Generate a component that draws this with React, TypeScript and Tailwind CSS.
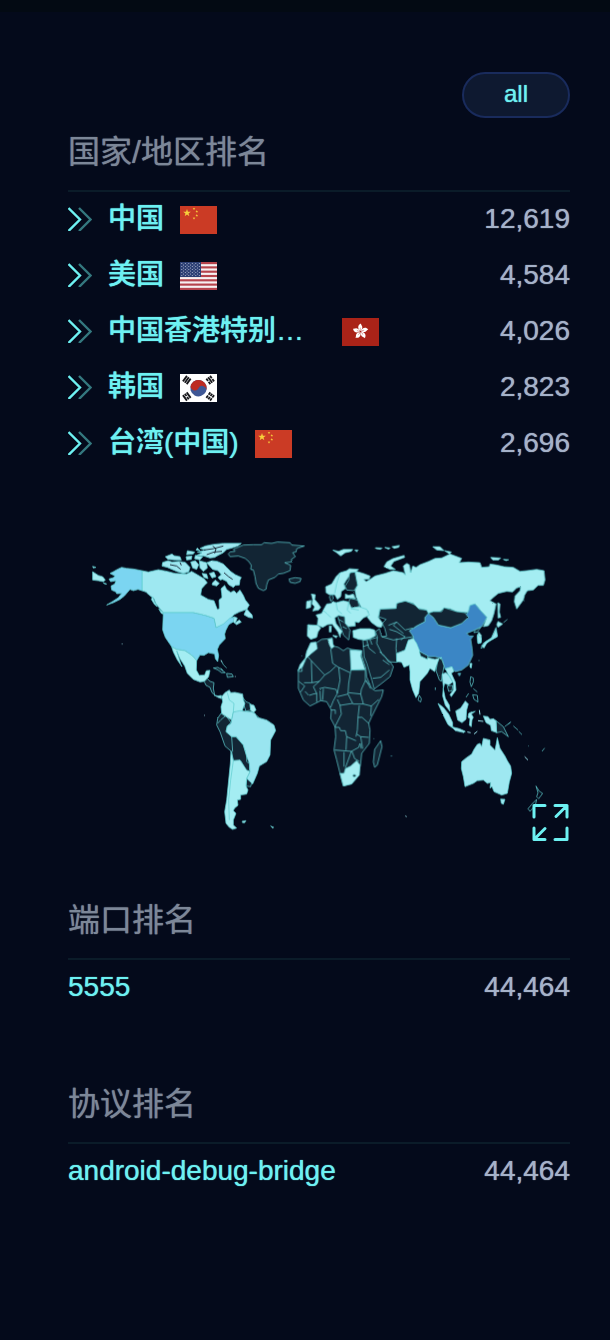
import type { ReactNode } from "react";

const SANS = "font-['Liberation_Sans','Noto_Sans_CJK_SC',sans-serif]";

function Chevrons() {
  return (
    <svg viewBox="0 0 24 24" className="mr-4 h-6 w-6 shrink-0" fill="none" strokeWidth="2.400" aria-hidden="true">
      <path d="M11 1 L22.500 12.500 L11 24" stroke="#34787f" />
      <path d="M0.500 1 L12 12.500 L0.500 24" stroke="#6df1f2" />
    </svg>
  );
}

function star(cx: number, cy: number, r: number) {
  return Array.from({ length: 10 }, (_, i) => {
    const a = -Math.PI / 2 + (i * Math.PI) / 5;
    const k = i % 2 ? r * 0.4 : r;
    return `${(cx + Math.cos(a) * k).toFixed(2)},${(cy + Math.sin(a) * k).toFixed(2)}`;
  }).join(" ");
}

function FlagFrame({ children, label }: { children: ReactNode; label: string }) {
  return (
    <svg viewBox="0 0 37 28" role="img" aria-label={label} className="h-7 w-[37px] shrink-0">
      {children}
    </svg>
  );
}

function ChinaFlag() {
  return (
    <FlagFrame label="CN">
      <rect width="37" height="28" fill="#cb3b25" />
      <g fill="#f7d03c">
        <polygon points={star(7, 7, 4)} />
        <polygon points={star(14, 2.8, 1.4)} />
        <polygon points={star(16.8, 5.5, 1.4)} />
        <polygon points={star(16.8, 9.5, 1.4)} />
        <polygon points={star(14, 12.3, 1.4)} />
      </g>
    </FlagFrame>
  );
}

function UsFlag() {
  return (
    <FlagFrame label="US">
      <rect width="37" height="28" fill="#f6f1f1" />
      {[0, 2, 4, 6, 8, 10, 12].map((i) => (
        <rect key={i} y={(i * 28) / 13} width="37" height={28 / 13} fill="#b5434b" />
      ))}
      <rect width="21" height="15" fill="#2c3f73" />
      {[0, 1, 2, 3, 4, 5, 6, 7, 8].map((r) =>
        Array.from({ length: r % 2 ? 5 : 6 }, (_, c) => (
          <circle key={`${r}-${c}`} cx={1.8 + c * 3.5 + (r % 2 ? 1.75 : 0)} cy={1.5 + r * 1.5} r="0.5" fill="#c9cfe0" />
        )),
      )}
    </FlagFrame>
  );
}

function HongKongFlag() {
  return (
    <FlagFrame label="HK">
      <rect width="37" height="28" fill="#aa2318" />
      {[0, 72, 144, 216, 288].map((a) => (
        <g key={a} transform={`translate(18.500 13.500) rotate(${a})`}>
          <path d="M0 -0.500 C-2.800 -2 -3.400 -6.500 0.500 -8 C0.200 -6.500 2.600 -5.500 1.600 -3 C1.200 -1.800 0.700 -1.200 0 -0.500Z" fill="#fff" />
          <path d="M0 -1 Q-0.800 -2.500 0 -3.800" stroke="#aa2318" strokeWidth="0.4" fill="none" />
        </g>
      ))}
    </FlagFrame>
  );
}

function Trigram({ x, y, angle, broken }: { x: number; y: number; angle: number; broken: boolean[] }) {
  return (
    <g transform={`translate(${x} ${y}) rotate(${angle})`} stroke="#16161a" strokeWidth="1.800">
      {broken.map((b, i) => (
        <path key={i} d={b ? "M-3.400 0 H-0.500 M0.500 0 H3.400" : "M-3.400 0 H3.400"} transform={`translate(0 ${(i - 1) * 2.3})`} />
      ))}
    </g>
  );
}

function KoreaFlag() {
  return (
    <FlagFrame label="KR">
      <rect width="37" height="28" fill="#fff" />
      <g transform="translate(18.500 14.200) rotate(28)">
        <circle r="8.200" fill="#3f5795" />
        <path d="M-8.200 0 A8.200 8.200 0 0 1 8.200 0 A4.100 4.100 0 0 0 0 0 A4.100 4.100 0 0 1 -8.200 0Z" fill="#bd2b22" />
      </g>
      <Trigram x={6.8} y={6} angle={-54} broken={[false, false, false]} />
      <Trigram x={30.2} y={6} angle={54} broken={[true, false, true]} />
      <Trigram x={6.8} y={22.5} angle={54} broken={[false, true, false]} />
      <Trigram x={30.2} y={22.5} angle={-54} broken={[true, true, true]} />
    </FlagFrame>
  );
}

const LIGHT = "#a4edf2";
const PALE = "#9ee8f1";
const SKY = "#7bd5f1";
const BLUE = "#3b86c5";
const DARK = "#122534";
const SEA = "#040a1b";

function NorthAmerica() {
  return (
    <g>
      <g fill={PALE}>
        <path d="M186 122 L205 126 235 119 262 124 285 130 320 132 335 124 352 134 372 146 382 158 375 165 365 176 362 195 385 208 402 212 408 228 412 238 418 236 417 210 426 202 425 190 423 176 434 166 440 178 452 187 462 182 470 190 480 180 490 196 496 210 508 225 500 238 478 246 462 254 448 268 462 260 472 264 466 278 478 270 484 276 470 284 460 276 445 278 408 293 402 265 375 256 340 248 250 248 240 236 228 222 222 206 206 194 198 186 186 182Z" />
        <path d="M492 254 L500 236 510 248 516 254 518 264 506 262Z" />
        <path d="M380 98 L396 92 412 94 430 102 440 112 452 124 466 134 484 142 480 150 478 165 466 166 460 172 446 164 440 154 428 148 420 150 414 142 424 134 414 122 398 118Z" />
        <path d="M360 55 L376 48 400 43 430 40 484 40 474 48 456 54 440 58 430 68 414 76 404 82 390 84 372 78 350 76 366 68 352 66 378 60Z" />
        <path d="M248 97 L264 92 276 96 298 94 316 97 330 112 326 126 310 130 290 124 276 118 262 112 246 108Z M256 80 L276 72 282 77 300 80 304 90 286 90 264 88Z M322 62 L344 66 340 72 320 74Z M318 80 L336 78 334 88 320 90Z M346 76 L368 80 360 90 344 86Z M332 96 L346 92 356 104 350 118 338 114Z M358 92 L380 98 382 114 370 124 360 114Z M352 54 L360 62 348 60Z M388 130 L402 126 408 140 396 144Z M398 158 L406 150 418 160 410 168 396 164Z M366 130 L380 132 384 146 372 142Z" />
        <path d="M218 200 L224 216 232 230 224 224 214 208Z M236 236 L248 246 256 254 244 250Z" />
      </g>
      <path fill="none" stroke={SEA} strokeWidth="2.500" d="M372 60 L400 56 430 48 M380 74 L402 66 426 64 M398 48 L408 56 404 70 M432 128 L446 140 458 148 M270 104 L290 108 302 118 M300 97 L304 106" />
      <g fill={SKY}>
        <path d="M186 122 L160 117 140 115 125 112 112 118 100 125 90 130 105 138 100 143 87 147 92 155 108 152 104 162 93 168 95 180 108 186 110 191 125 190 115 203 98 214 80 225 100 218 120 208 133 198 150 178 160 182 174 178 186 182Z" />
        <path d="M250 248 H340 L375 256 402 265 408 293 430 282 450 264 462 262 460 275 446 284 438 300 434 312 436 326 418 345 412 358 416 376 413 395 406 386 404 372 385 368 372 376 360 375 350 392 340 380 330 372 315 362 290 358 275 350 264 334 256 322 248 300Z" />
      </g>
      <path fill={LIGHT} d="M38 125 L55 136 68 140 76 150 70 155 55 152 38 150Z M38 109 L48 112 40 114Z M70 158 L80 162 74 162Z" />
      <path fill={LIGHT} d="M275 350 L290 358 315 362 330 372 340 380 350 392 349 420 358 436 374 435 379 422 390 421 386 440 374 454 360 456 340 448 322 430 314 408 300 386 290 362 303 404 306 410 292 390 280 366Z" />
    </g>
  );
}

function SouthAmerica() {
  return (
    <g transform="translate(210 330)">
      <g fill={DARK}>
        <path d="M163 125 L172 116 180 124 192 128 190 145 194 165 186 158 180 142 168 136Z" />
        <path d="M190 84 L204 82 226 98 214 98 204 90Z M230 100 L246 102 250 110 232 112Z" />
        <path d="M213 220 L232 232 243 248 232 258 228 275 245 290 258 290 280 315 290 345 290 365 300 372 298 392 290 395 272 362 250 362 245 335 225 318 210 275 200 255 203 235Z" />
        <path d="M278 172 L288 185 300 190 302 210 288 214 282 196Z" />
        <path d="M290 415 L305 428 302 440 288 438Z" />
      </g>
      <path fill={LIGHT} d="M192 165 L204 168 214 166 214 176 204 172Z M215 170 L225 158 238 150 242 158 255 157 278 162 280 180 285 190 276 214 250 216 245 240 232 232 215 220 213 200 218 185Z M300 192 L312 196 318 210 310 218 302 212Z" />
      <path fill="#99e5f0" d="M245 240 L250 216 270 212 288 214 303 215 315 220 322 232 350 240 372 255 377 272 362 300 360 345 350 365 328 378 322 400 308 432 290 415 300 395 298 370 290 350 280 315 258 290 245 290 228 275 232 258 243 250Z" />
      <path fill={LIGHT} d="M243 333 L250 362 270 360 290 390 300 395 290 415 288 438 294 450 290 462 272 465 272 478 262 480 264 496 254 504 250 512 258 520 250 540 250 555 260 564 248 568 238 562 228 550 224 515 230 480 235 430 241 370Z M276 544 L288 542 284 548 278 548Z M362 558 L371 562 368 564Z" />
      <path fill="none" d="M250 362 L242 420 236 480 238 540 M245 290 L248 335 M232 158 L238 180 252 190 250 215 M203 250 L212 240 226 228 M212 84 L220 92 M214 62 L220 74 230 84 M320 226 l8 8" />
      <path fill="none" stroke={LIGHT} d="M162 226 h3 M-85 12 h3 M213 60 l2 6 M256 108 v3" />
    </g>
  );
}

function EuropeAsia() {
  return (
    <g transform="translate(630 0)">
      <path fill={DARK} d="M270 237 L318 235 320 217 348 213 375 225 388 238 412 240 416 252 405 262 405 275 375 290 368 305 372 330 355 335 345 362 320 397 295 395 284 378 270 365 275 372 300 395 310 410 300 440 275 460 252 477 245 450 230 400 222 380 220 350 218 330 240 328 262 322 256 305 268 296 275 320 290 318 284 295 276 280 288 268 265 260Z" />
      <path fill={DARK} d="M178 128 L195 124 203 165 192 182 170 180 165 168 176 150Z M180 205 L203 210 208 230 184 234 172 226Z M140 250 L172 256 170 285 180 300 176 330 160 315 152 290Z M118 200 L126 190 130 206 122 214Z" />
      <path fill={LIGHT} d="M195 123 L220 130 240 138 238 147 222 148 228 155 240 148 255 138 285 130 310 122 340 128 346 135 340 108 350 100 358 104 362 128 368 108 378 112 390 104 416 94 435 85 455 84 480 72 515 85 508 98 535 96 570 98 575 112 598 110 600 102 620 105 642 110 670 112 690 124 710 122 740 118 762 122 765 150 760 166 744 166 730 180 712 182 704 195 700 210 680 237 673 215 675 198 690 182 692 170 680 174 668 186 650 184 625 190 610 202 600 212 618 222 612 250 605 272 595 287 580 290 590 262 570 240 555 222 540 228 535 248 500 245 480 236 462 235 450 245 430 245 415 250 410 240 385 235 370 220 345 213 320 220 318 235 270 237 265 262 278 280 274 292 262 290 245 278 232 262 235 245 215 235 205 215 198 200 195 180 203 165 198 140Z" />
      <g fill={LIGHT}>
        <path d="M107 170 L125 162 138 140 150 128 170 122 178 116 205 118 198 126 180 128 176 140 168 152 162 162 166 176 154 184 152 200 142 208 134 194 118 194 108 188Z" />
        <path d="M78 255 L95 250 100 240 110 222 124 220 128 214 138 218 160 212 176 216 184 234 208 230 230 238 238 255 220 264 206 278 195 275 196 288 176 290 165 280 164 260 145 256 134 264 138 280 156 304 152 312 150 322 144 306 126 282 112 284 98 292 82 285 84 265Z" />
        <path d="M53 284 L84 286 92 294 84 306 80 322 62 328 52 318Z" />
        <path d="M64 192 L76 194 74 208 84 220 92 232 86 240 68 243 74 230 66 222 68 208Z M50 214 L63 211 62 232 49 236Z" />
        <path d="M188 302 L210 296 240 296 254 300 256 318 240 326 224 330 206 328 190 322Z" />
        <path d="M166 192 L176 196 190 192 196 206 178 204 166 206Z" />
        <path d="M282 110 L290 96 308 86 342 76 344 82 312 94 302 108 316 118 300 118Z M128 60 L146 64 160 58 188 58 184 64 166 68 152 78 140 68Z M256 53 L276 54 272 58 258 56Z M284 52 L300 54 296 58Z M306 50 L328 46 326 52 312 55Z M128 316 L142 318 138 324Z M118 288 L124 288 123 306 118 306Z M194 60 L204 60 200 66Z M428 50 L450 50 462 62 440 60Z M464 62 L484 66 478 72Z M602 82 L632 84 626 90 608 90Z M640 88 L656 89 648 92Z" />
        <path d="M623 218 L630 222 628 246 632 262 624 264Z M566 306 L574 316 573 338 564 340 562 320Z M624 274 L638 282 624 292 620 284Z M618 292 L622 320 598 332 576 346 574 356 580 340 604 324 612 306Z" />
      </g>
      <path fill={BLUE} d="M415 250 L430 262 445 285 482 293 515 280 535 262 525 258 535 245 540 226 555 222 570 240 590 262 575 290 555 300 530 310 538 318 550 318 542 328 546 354 548 376 535 405 515 420 495 425 485 412 465 418 455 385 435 380 410 380 385 368 370 345 370 320 358 302 388 284 405 275 405 262Z M504 430 L512 430 508 438Z" />
      <path fill={DARK} d="M415 250 L430 245 455 245 462 233 500 245 525 248 535 262 515 280 482 293 445 285 430 262Z M555 300 L572 292 562 306 552 308Z" />
      <path fill="none" d="M54 285 L58 300 M98 240 L110 250 122 262 M138 218 L142 240 156 252 M176 216 L172 240 182 250 M182 236 L206 240 M146 268 L160 276 M158 290 L170 296 M150 128 L140 160 134 190 M295 286 L320 276 345 300 M298 298 L320 305 345 320 332 330 M320 276 L310 286 340 310 M345 300 L368 294 M275 320 L310 330 338 325 M262 322 L260 340 274 368 M230 330 L236 354 256 370 M320 325 L318 355 322 396 M338 325 L370 320 M218 350 L236 344 M240 328 L246 344 M248 445 L272 442 298 420 M278 390 L298 404 M640 278 L652 268 M702 212 h2" />
    </g>
  );
}

function Africa() {
  return (
    <g transform="translate(630 300)">
      <path fill={DARK} d="M62 40 L80 38 95 28 125 25 130 48 145 52 160 62 172 54 185 58 215 62 215 75 228 115 230 140 245 175 255 182 280 180 275 200 245 260 236 280 240 300 238 340 215 370 212 400 205 435 185 460 160 468 150 430 140 390 132 360 137 320 135 290 122 265 124 240 110 215 92 212 60 228 40 210 25 175 25 120 45 95 50 70Z" />
      <path fill={LIGHT} d="M62 38 L78 36 82 56 62 72 46 88 38 110 24 122 30 104 46 84 50 64Z M114 28 L127 24 128 40 132 50 124 56 118 44Z M180 60 L215 62 212 78 225 118 183 120Z M150 430 L162 430 166 416 182 408 200 392 210 405 208 435 185 462 160 468Z" />
      <path fill={DARK} d="M272 332 L276 350 262 405 254 412 250 396 254 358Z" />
      <g fill="none">
        <path d="M55 82 L64 92 104 135 M64 92 L66 158 M24 124 H36 V108 M122 56 L128 100 146 112 M104 135 L120 125 138 108 M146 112 L150 150 142 190 M146 112 L180 128 M183 118 L176 160 174 192 M183 120 H226 M226 120 L226 152 M66 158 H42 M26 154 L44 168 32 186 M66 158 L88 154 104 135 M80 190 L70 170 88 154 M58 196 L70 192 80 190 V216 M90 182 L92 212 M100 176 L98 210 M88 176 L104 172 M104 172 L138 178 142 190 130 212 122 232 M142 200 L174 192 188 220 150 226 142 208 M176 188 L212 192 214 178 226 152 M226 152 L238 164 M212 192 L220 222 244 228 266 208 M188 222 L208 222 220 222 M208 226 L204 262 216 262 236 280 M244 228 L242 258 M150 226 L154 252 134 292 M204 262 L202 300 198 320 M136 292 H148 L152 302 H166 L170 320 198 332 M134 360 L184 364 M170 320 L168 360 M162 366 V410 M184 364 L166 414 M184 364 L206 352 210 340 214 356 M186 364 L194 386 208 394 M200 312 L212 320 236 322 M212 320 L218 356 M122 240 H136 V252 M228 150 L242 176 M45 184 L56 196" />
        <circle cx="193" cy="437" r="4" fill={DARK} />
        <path d="M304 378 h2 M250 326 h2 M34 78 h2" />
      </g>
    </g>
  );
}

function SouthAsiaOceania() {
  return (
    <g transform="translate(930 300)">
      <path fill={LIGHT} d="M20 70 L45 60 55 30 70 25 80 40 90 65 110 82 135 88 155 82 148 98 140 105 134 125 120 115 112 130 90 155 86 190 78 203 68 180 60 150 60 125 58 105 42 112 35 97 20 95Z" />
      <path fill={DARK} d="M88 64 L114 78 112 88 92 78Z M148 84 L156 90 162 108 158 130 154 154 148 150 138 122 142 100Z M172 168 L188 166 186 182 176 184Z M318 272 L340 290 355 320 335 305 320 308Z" />
      <g fill={PALE}>
        <path d="M156 132 L168 128 180 140 188 156 176 165 164 160 160 176 166 205 178 225 180 244 166 226 158 198 160 170Z M166 116 L186 110 192 124 184 130 196 156 198 180 184 200 180 194 190 180 190 160 174 132Z" />
        <path d="M144 220 L160 232 176 252 188 278 188 294 174 284 160 256Z M184 290 L208 296 226 304 222 308 196 302Z M197 243 L212 234 226 213 235 222 230 240 228 268 216 278 203 270Z M236 250 L244 246 256 244 244 252 250 262 246 270 244 290 238 286 240 266 234 262Z M280 258 L294 260 300 268 310 266 318 272 320 308 304 302 302 286 288 278Z M240 100 L246 100 244 114 240 112Z" />
        <path d="M215 395 L228 384 245 372 252 358 262 343 270 340 275 350 280 325 300 330 300 345 315 360 318 345 322 323 330 355 345 378 352 392 362 408 365 430 358 456 352 490 335 495 312 485 306 470 300 474 302 458 292 460 280 450 262 452 250 460 225 470 220 440 214 416Z M332 507 L345 508 340 523 334 520Z" />
        <path stroke={PALE} strokeWidth="3" d="M232 306 L242 308 M262 304 L252 312 M264 272 L280 274 M268 240 L270 254 M404 380 L414 390 M46 558 l4 2" />
        <path d="M262 14 L274 24 273 38 264 40Z M318 0 L322 18 298 34 290 40 282 54 276 48 286 36 306 24Z" />
      </g>
      <path fill="none" d="M88 196 L94 206 92 216 84 210Z M242 140 L250 144 250 156 244 170 240 156Z M250 176 L262 186 M248 194 L262 196 264 216 252 208Z M228 202 L236 190 M344 290 L362 276 354 284 M370 288 L384 300 M386 304 L396 314 M456 364 L464 354 M438 468 L448 484 458 490 446 506 440 500 444 488Z M440 508 L428 520 414 536 420 544 436 526Z M414 348 h2 M136 172 v8 M2 378 h2 M267 90 v3" />
    </g>
  );
}

function WorldMap() {
  return (
    <svg viewBox="-36 0 1506 960" className="block h-auto w-full" role="img" aria-label="世界地图">
      <defs>
        <filter id="coast" x="-2%" y="-2%" width="104%" height="104%" colorInterpolationFilters="sRGB">
          <feTurbulence type="fractalNoise" baseFrequency="0.12" numOctaves="1" seed="4" />
          <feDisplacementMap in="SourceGraphic" scale="5" xChannelSelector="R" yChannelSelector="G" />
        </filter>
      </defs>
      <g filter="url(#coast)" stroke="#62cfd2" strokeWidth="2.200" strokeLinejoin="round">
        <NorthAmerica />
        <path
          transform="translate(330 0)"
          fill={DARK}
          d="M115 72 L120 66 135 64 130 58 160 45 190 44 215 44 222 38 245 40 262 36 300 38 305 45 343 48 320 56 318 66 308 68 316 80 304 88 306 96 284 98 302 106 300 122 280 130 265 132 255 142 235 150 230 165 228 178 220 182 205 175 198 160 195 140 190 120 182 118 184 106 176 94 165 85 145 78 120 80Z M297 147 L315 143 333 145 330 155 315 160 300 157Z"
        />
        <SouthAmerica />
        <Africa />
        <EuropeAsia />
        <SouthAsiaOceania />
      </g>
    </svg>
  );
}

function RankSection({ title, children }: { title: string; children: ReactNode }) {
  return (
    <section>
      <h2 className="border-b-2 border-[#0b1c29] pt-2.5 pb-3.5 text-[32px] leading-[48px] text-[#7c8798] text-shadow-[0_0_1px_currentColor]">
        {title}
      </h2>
      <ul>{children}</ul>
    </section>
  );
}

function Row({ children, count }: { children: ReactNode; count: string }) {
  return (
    <li className="flex h-14 items-center justify-between pb-0.5 text-[28px] leading-8 text-[#a5b2c9] text-shadow-[0_0_1px_currentColor]">
      <a href="#" className="flex min-w-0 items-center font-medium text-[#6df1f2]">
        {children}
      </a>
      <span>{count}</span>
    </li>
  );
}

const COUNTRIES = [
  { name: "中国", count: "12,619", Flag: ChinaFlag },
  { name: "美国", count: "4,584", Flag: UsFlag },
  { name: "中国香港特别…", count: "4,026", Flag: HongKongFlag, clipped: true },
  { name: "韩国", count: "2,823", Flag: KoreaFlag },
  { name: "台湾(中国)", count: "2,696", Flag: ChinaFlag },
];

export default function App() {
  return (
    <main className={`min-h-screen border-t-12 border-[#030a13] bg-[#040a1b] pt-[60px] pr-10 pb-[140px] pl-[68px] ${SANS}`}>
      <div className="flex justify-end">
        <button className="h-[46px] w-[108px] rounded-full border-2 border-[#192b5c] bg-[#0e1930] pb-0.5 text-2xl leading-8 text-[#6df1f2] text-shadow-[0_0_1px_currentColor]">
          all
        </button>
      </div>
      <RankSection title="国家/地区排名">
        {COUNTRIES.map(({ name, count, Flag, clipped }) => (
          <Row key={name} count={count}>
            <Chevrons />
            <span className={clipped ? "mr-4 w-[218px]" : "mr-4"}>{name}</span>
            <span className="pt-0.5">
              <Flag />
            </span>
          </Row>
        ))}
      </RankSection>
      <div className="relative mt-[58px] mb-9">
        <WorldMap />
        <button aria-label="全屏" className="absolute right-0 bottom-2 h-10 w-10">
          <svg viewBox="0 0 40 40" className="h-10 w-10" fill="none" stroke="#6df1f2" strokeWidth="3" strokeLinecap="round" strokeLinejoin="round">
            <path d="M4 15 V3.500 H15 M25 3.500 H37 V15 M37 3.500 L26 14.500 M4 26 V37.500 H15 M4 37.500 L15 26.500 M25 37.500 H37 V26" />
          </svg>
        </button>
      </div>
      <RankSection title="端口排名">
        <Row count="44,464">5555</Row>
      </RankSection>
      <div className="mt-[54px]">
        <RankSection title="协议排名">
          <Row count="44,464">android-debug-bridge</Row>
        </RankSection>
      </div>
    </main>
  );
}
